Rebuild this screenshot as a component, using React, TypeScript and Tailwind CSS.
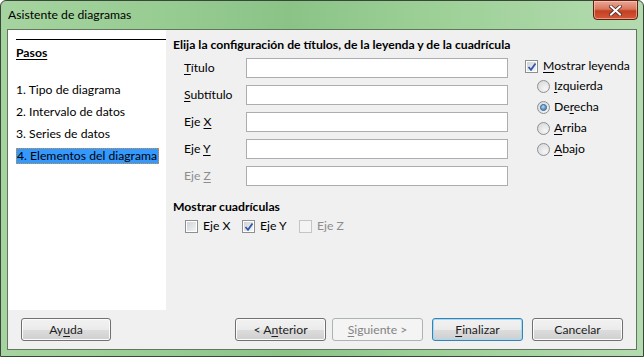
import React from 'react';

// Windows 7 style chart wizard dialog
const U = ({ children }: { children: React.ReactNode }) => <span className="underline underline-offset-2">{children}</span>;

const CheckBox = ({ checked = false, disabled = false }: { checked?: boolean; disabled?: boolean }) => (
  <span
    className={`relative flex h-[13px] w-[13px] shrink-0 items-center justify-center border ${
      disabled ? 'border-[#c5c5c5] bg-[#f4f4f4]' : 'border-[#8e8f8f] bg-white'
    }`}
  >
    <span
      className={`h-[9px] w-[9px] ${
        disabled ? 'bg-[#f4f4f4]' : 'bg-[linear-gradient(135deg,#cfd3d8,#f3f3f3)]'
      }`}
    />
    {checked && (
      <svg className="absolute left-[1px] top-[1px]" width="10" height="10" viewBox="0 0 10 10">
        <path d="M1.5 5 L4 7.8 L8.5 1.5" fill="none" stroke="#3057a8" strokeWidth="1.8" />
      </svg>
    )}
  </span>
);

const Radio = ({ checked = false }: { checked?: boolean }) => (
  <span className="flex h-[13px] w-[13px] shrink-0 items-center justify-center rounded-full border border-[#8e8f8f] bg-[radial-gradient(circle_at_65%_70%,#f6f6f6,#d2d4d7)]">
    {checked && (
      <span className="h-[5px] w-[5px] rounded-full bg-[radial-gradient(circle_at_40%_35%,#a9e2ff,#1d5e9e)] outline outline-1 outline-[#27548a]" />
    )}
  </span>
);

const Button = ({
  children,
  w = 'w-[91px]',
  disabled = false,
  focused = false,
}: {
  children: React.ReactNode;
  w?: string;
  disabled?: boolean;
  focused?: boolean;
}) => (
  <button
    className={`${w} h-[23px] rounded-[3px] border font-['Lato',sans-serif] text-[12.2px] font-normal ${
      disabled
        ? 'border-[#adb2b5] bg-[#f4f4f4] text-[#838383]'
        : focused
          ? 'border-[#3c7fb1] bg-[linear-gradient(#f2f2f2_0%,#ebebeb_50%,#dddddd_50%,#cfcfcf_100%)] text-[#1e1e1e] shadow-[inset_0_0_0_1px_#9fdcf7]'
          : 'border-[#707070] bg-[linear-gradient(#f2f2f2_0%,#ebebeb_50%,#dddddd_50%,#cfcfcf_100%)] text-[#1e1e1e] shadow-[inset_0_0_0_1px_#fcfcfc]'
    }`}
  >
    {children}
  </button>
);

const fields: { label: React.ReactNode; disabled?: boolean }[] = [
  { label: <><U>T</U>ítulo</> },
  { label: <><U>S</U>ubtítulo</> },
  { label: <>Eje <U>X</U></> },
  { label: <>Eje <U>Y</U></> },
  { label: <>Eje <U>Z</U></>, disabled: true },
];

const steps = ['1. Tipo de diagrama', '2. Intervalo de datos', '3. Series de datos'];

const App: React.FC = () => {
  return (
    <div className="h-[357px] w-[644px] overflow-hidden font-['Lato',sans-serif] text-[12.2px] leading-[16px] text-black">
      <div className="flex h-full w-full flex-col rounded-t-[6px] border border-[#3b463b] bg-[linear-gradient(90deg,#a6d4a0,#97cc92_25%,#8bc387_45%,#9bcf95_65%,#a9d6a4_85%,#b4dbaf)] px-[6px] pb-[6px]">
        {/* title bar */}
        <div className="flex h-[28px] shrink-0 items-start justify-between">
          <span className="mt-[6px] pl-[1px]">Asistente de diagramas</span>
          <div className="mr-[-1px] mt-[-1px] flex h-[20px] w-[45px] items-center justify-center rounded-b-[4px] border border-[#5e2013] bg-[linear-gradient(#e9a796_0%,#d9775e_45%,#c3401f_55%,#d4583a_100%)] shadow-[inset_0_0_0_1px_rgba(255,220,200,0.5)]">
            <svg width="13" height="11" viewBox="0 0 13 11">
              <path d="M2 1.5 L11 9.5 M11 1.5 L2 9.5" stroke="#4a2a22" strokeWidth="3.6" strokeLinecap="square" />
              <path d="M2 1.5 L11 9.5 M11 1.5 L2 9.5" stroke="#ffffff" strokeWidth="2" strokeLinecap="square" />
            </svg>
          </div>
        </div>

        {/* client area */}
        <div className="flex flex-1 flex-col border border-[#62765f] bg-[#f0f0f0]">
          <div className="flex h-[280px]">
            {/* steps panel */}
            <div className="w-[158px] shrink-0 bg-white pl-[8px]">
              <div className="mt-[9px] border-t border-black" />
              <div className="mt-[5px] font-bold underline underline-offset-2">Pasos</div>
              <div className="mt-[21px] flex flex-col">
                {steps.map((s) => (
                  <div key={s} className="h-[22px] whitespace-nowrap leading-[16px]">
                    {s}
                  </div>
                ))}
                <div className="h-[22px]">
                  <span className="inline-block h-[16px] whitespace-nowrap border border-dotted border-[#e58b1f] bg-[#3399ff] pr-[1px] leading-[14px]">
                    4. Elementos del diagrama
                  </span>
                </div>
              </div>
            </div>

            {/* settings panel */}
            <div className="flex-1 pl-[7px] pt-[7px]">
              <div className="whitespace-nowrap font-bold">Elija la configuración de títulos, de la leyenda y de la cuadrícula</div>
              <div className="mt-[5px] flex">
                <div className="ml-[11px] flex flex-col gap-[7px]">
                  {fields.map((f, i) => (
                    <div key={i} className="flex h-[20px] items-center">
                      <span className={`w-[62px] ${f.disabled ? 'text-[#8d8d8d]' : ''}`}>{f.label}</span>
                      <div className="h-[20px] w-[262px] border border-[#abadb3] bg-white" />
                    </div>
                  ))}
                </div>
                <div className="ml-[17px] flex flex-col">
                  <div className="flex h-[16px] items-center gap-[5px]">
                    <CheckBox checked />
                    <span className="whitespace-nowrap">
                      <U>M</U>ostrar leyenda
                    </span>
                  </div>
                  <div className="ml-[12px] mt-[4px] flex flex-col gap-[5px]">
                    <div className="flex h-[16px] items-center gap-[4px]">
                      <Radio />
                      <span>
                        <U>I</U>zquierda
                      </span>
                    </div>
                    <div className="flex h-[16px] items-center gap-[4px]">
                      <Radio checked />
                      <span>
                        De<U>r</U>echa
                      </span>
                    </div>
                    <div className="flex h-[16px] items-center gap-[4px]">
                      <Radio />
                      <span>
                        <U>A</U>rriba
                      </span>
                    </div>
                    <div className="flex h-[16px] items-center gap-[4px]">
                      <Radio />
                      <span>
                        <U>A</U>bajo
                      </span>
                    </div>
                  </div>
                </div>
              </div>

              <div className="mt-[13px] font-bold">Mostrar cuadrículas</div>
              <div className="ml-[12px] mt-[3px] flex h-[16px] items-center">
                <div className="flex w-[57px] items-center gap-[5px]">
                  <CheckBox />
                  <span>Eje X</span>
                </div>
                <div className="flex w-[57px] items-center gap-[5px]">
                  <CheckBox checked />
                  <span>Eje Y</span>
                </div>
                <div className="flex items-center gap-[5px] text-[#8d8d8d]">
                  <CheckBox disabled />
                  <span>Eje Z</span>
                </div>
              </div>
            </div>
          </div>

          {/* button row */}
          <div className="flex flex-1 items-center pl-[13px] pr-[13px]">
            <Button w="w-[90px]">
              Ay<U>u</U>da
            </Button>
            <div className="ml-auto flex gap-[6px]">
              <Button>
                &lt; A<U>n</U>terior
              </Button>
              <Button disabled>
                <U>S</U>iguiente &gt;
              </Button>
              <div className="ml-[3px]">
                <Button focused>
                  <U>F</U>inalizar
                </Button>
              </div>
              <div className="ml-[3px]">
                <Button>Cancelar</Button>
              </div>
            </div>
          </div>
        </div>
      </div>
    </div>
  );
};

export default App;
